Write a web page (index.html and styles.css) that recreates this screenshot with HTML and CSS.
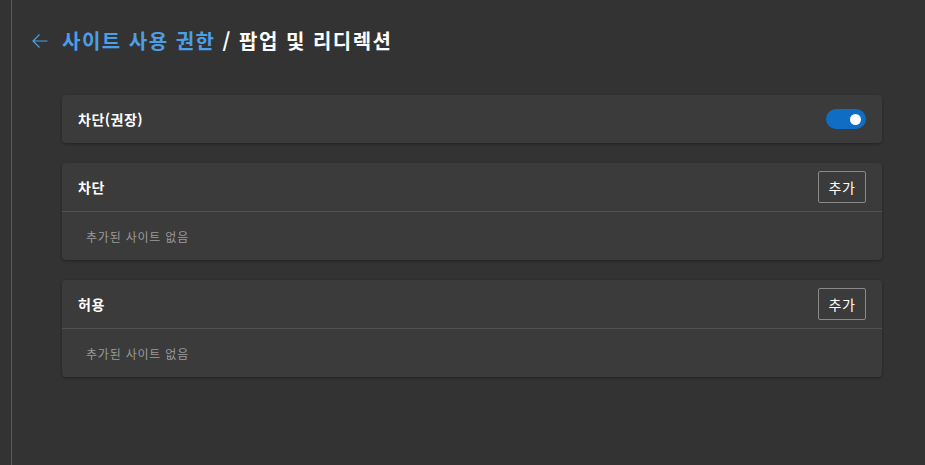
FILE: index.html
```html
<!DOCTYPE html>
<html lang="ko">
<head>
<meta charset="utf-8">
<title>팝업 및 리디렉션</title>
<link rel="stylesheet" href="styles.css">
</head>
<body>
<div class="app">
  <div class="rail"></div>
  <main class="main">
    <header class="page-header">
      <svg class="back" width="16" height="16" viewBox="0 0 16 16" aria-hidden="true">
        <path d="M15.5 8H1M7.5 1.5L1 8l6.5 6.5" fill="none" stroke="#4c9fe6" stroke-width="1.2"/>
      </svg>
      <h1 class="title"><span class="crumb">사이트 사용 권한</span><span class="current"> / 팝업 및 리디렉션</span></h1>
    </header>

    <section class="card">
      <div class="row">
        <span class="label">차단(권장)</span>
        <span class="toggle"><span class="knob"></span></span>
      </div>
    </section>

    <section class="card">
      <div class="row">
        <span class="label">차단</span>
        <button class="btn">추가</button>
      </div>
      <div class="row empty">추가된 사이트 없음</div>
    </section>

    <section class="card">
      <div class="row">
        <span class="label">허용</span>
        <button class="btn">추가</button>
      </div>
      <div class="row empty">추가된 사이트 없음</div>
    </section>
  </main>
</div>
</body>
</html>
```
FILE: styles.css
```css
html, body {
  margin: 0;
  height: 100%;
  background: #333333;
  font-family: "Noto Sans CJK KR", "Noto Sans", sans-serif;
  color: #ffffff;
}
.app {
  display: flex;
  min-height: 100%;
}
.rail {
  width: 11px;
  flex: none;
  border-right: 1px solid #5a5a5a;
}
.main {
  flex: 1;
  padding: 0 43px 0 20px;
}
.page-header {
  display: flex;
  align-items: center;
  gap: 14px;
  padding-top: 24px;
  height: 34px;
  margin-bottom: 37px;
}
.back { flex: none; }
.title {
  margin: 0;
  font-size: 20px;
  line-height: 34px;
  font-weight: 700;
  letter-spacing: 1.5px;
}
.crumb { color: #4c9fe6; }
.current { color: #ffffff; }
.card {
  margin-left: 30px;
  width: 820px;
  background: #3b3b3b;
  border-radius: 4px;
  box-shadow: 0 1px 3px rgba(0,0,0,0.35);
  margin-bottom: 20px;
}
.row {
  height: 48px;
  display: flex;
  align-items: center;
  justify-content: space-between;
  padding: 0 16px;
  box-sizing: border-box;
}
.row + .row {
  border-top: 1px solid #515151;
  height: 49px;
}
.label {
  font-size: 14px;
  font-weight: 700;
  color: #ffffff;
  letter-spacing: 0.5px;
}
.empty {
  padding-left: 24px;
  font-size: 12px;
  color: #9a9a9a;
  letter-spacing: 0.8px;
}
.toggle {
  width: 40px;
  height: 20px;
  border-radius: 10px;
  background: #0f6ec4;
  display: flex;
  align-items: center;
  justify-content: flex-end;
  padding-right: 5px;
  box-sizing: border-box;
}
.knob {
  width: 11px;
  height: 11px;
  border-radius: 50%;
  background: #ffffff;
}
.btn {
  width: 48px;
  height: 32px;
  background: transparent;
  border: 1px solid #8a8a8a;
  border-radius: 2px;
  color: #ffffff;
  font-family: inherit;
  font-size: 14px;
  padding: 0;
  letter-spacing: 0.5px;
}
```
